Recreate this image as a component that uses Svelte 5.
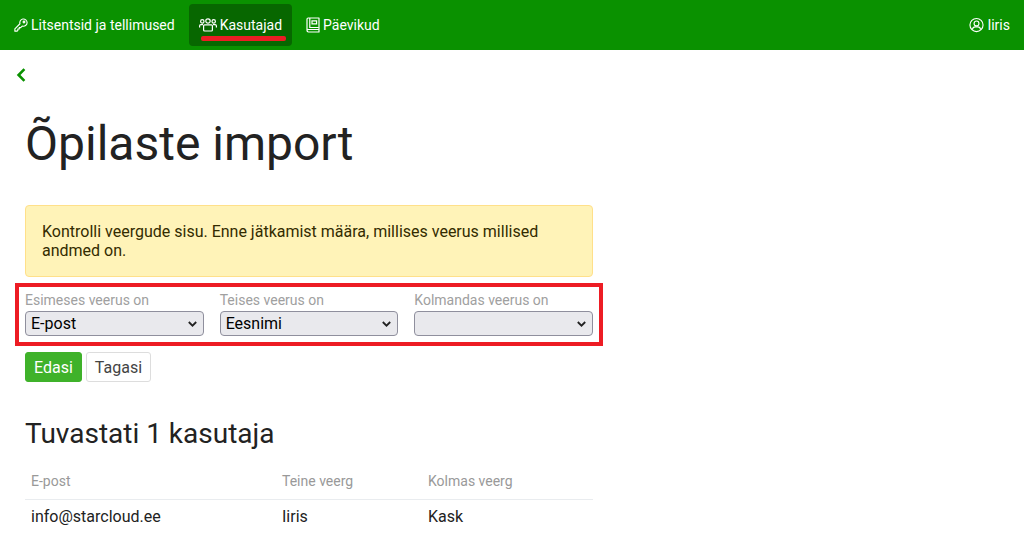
<script>
  const options = ['', 'E-post', 'Eesnimi', 'Perekonnanimi'];
  const columns = [
    { label: 'Esimeses veerus on', value: 'E-post' },
    { label: 'Teises veerus on', value: 'Eesnimi' },
    { label: 'Kolmandas veerus on', value: '' },
  ];
</script>

<nav class="topbar">
  <div class="nav-links">
    <a class="nav-link" href="#litsentsid">
      <svg viewBox="0 0 16 16" width="14" height="16" fill="none" stroke="currentColor" stroke-width="1.300">
        <path d="M15 5.200a4.200 4.200 0 0 1-5.600 4L7.600 11H6v1.600H4.400v1.600L3.600 15H1v-2.600l5.800-5.800A4.200 4.200 0 1 1 15 5.200z" stroke-linejoin="round" />
        <circle cx="11.400" cy="4.600" r="1" />
      </svg>
      Litsentsid ja tellimused
    </a>
    <a class="nav-link active" href="#kasutajad">
      <svg viewBox="0 0 18 14" width="18" height="14" fill="none" stroke="currentColor" stroke-width="1.2">
        <circle cx="9" cy="3" r="2.200" />
        <circle cx="3.300" cy="3.400" r="1.700" />
        <circle cx="14.700" cy="3.400" r="1.700" />
        <path d="M4.600 7.800c0-.6.500-1 1-1h6.800c.5 0 1 .4 1 1V12c0 .6-.5 1-1 1H5.600c-.5 0-1-.4-1-1z" stroke-linejoin="round" />
        <path d="M.6 9.600V8c0-.8.600-1.300 1.300-1.300h2.100M17.400 9.600V8c0-.8-.6-1.300-1.300-1.300H14" />
      </svg>
      Kasutajad
      <span class="mark-underline"></span>
    </a>
    <a class="nav-link" href="#paevikud">
      <svg viewBox="0 0 14 16" width="14" height="16" fill="none" stroke="currentColor" stroke-width="1.2">
        <path d="M1 13.200V2.200C1 1.500 1.500 1 2.200 1H13v11.500H2.500C1.600 12.500 1 12.900 1 13.600S1.600 15 2.500 15H13v-2.500" stroke-linejoin="round" />
        <path d="M3.800 1v9.500h9M6 3.800h4.600v3H6z" />
      </svg>
      Päevikud
    </a>
  </div>
  <a class="nav-link" href="#konto">
    <svg viewBox="0 0 16 16" width="15" height="16" fill="none" stroke="currentColor" stroke-width="1.2">
      <circle cx="8" cy="8" r="7" />
      <circle cx="8" cy="6.300" r="2.600" />
      <path d="M3.600 13c.4-2 1.800-3 3-3h2.800c1.200 0 2.600 1 3 3" />
    </svg>
    Iiris
  </a>
</nav>

<main class="page">
  <a class="back" href="#tagasi" aria-label="Tagasi">
    <svg viewBox="0 0 10 14" width="10" height="14" fill="none" stroke="currentColor" stroke-width="2.600">
      <path d="M8.400 1.200 2.600 7l5.800 5.800" />
    </svg>
  </a>

  <h1>Õpilaste import</h1>

  <div class="alert">Kontrolli veergude sisu. Enne jätkamist määra, millises veerus millised andmed on.</div>

  <div class="mapping">
    <div class="mapping-mark"></div>
    {#each columns as col (col.label)}
      <label class="field">
        <span class="field-label">{col.label}</span>
        <span class="select-wrap">
          <select value={col.value}>
            {#each options as opt}
              <option value={opt}>{opt}</option>
            {/each}
          </select>
          <svg class="select-chevron" viewBox="0 0 9 6" width="9" height="6" fill="none" stroke="currentColor" stroke-width="1.800">
            <path d="M.8 1 4.500 4.700 8.200 1" />
          </svg>
        </span>
      </label>
    {/each}
  </div>

  <div class="actions">
    <button class="btn primary">Edasi</button>
    <button class="btn">Tagasi</button>
  </div>

  <h2>Tuvastati 1 kasutaja</h2>

  <table>
    <thead>
      <tr>
        <th>E-post</th>
        <th>Teine veerg</th>
        <th>Kolmas veerg</th>
      </tr>
    </thead>
    <tbody>
      <tr>
        <td>info@starcloud.ee</td>
        <td>Iiris</td>
        <td>Kask</td>
      </tr>
    </tbody>
  </table>
</main>

<style>
  :global(body) {
    font-family: Roboto, "Liberation Sans", sans-serif;
    color: #222;
    background: #fff;
    overflow: hidden;
  }

  /* top bar */
  .topbar {
    display: flex;
    align-items: center;
    justify-content: space-between;
    height: 50px;
    background: #0a9100;
    padding: 0 4px;
    box-sizing: border-box;
  }
  .nav-links {
    display: flex;
    align-items: center;
    gap: 4px;
  }
  .nav-link {
    position: relative;
    display: flex;
    align-items: center;
    gap: 3px;
    height: 42px;
    padding: 0 10px;
    border-radius: 4px;
    color: #fff;
    font-size: 14px;
    text-decoration: none;
  }
  .nav-link.active {
    background: #076700;
  }
  .mark-underline {
    position: absolute;
    left: 12px;
    right: 6px;
    bottom: 5px;
    height: 5px;
    border-radius: 2px;
    background: #ed1c24;
  }

  /* page */
  .page {
    width: 568px;
    margin-left: 25px;
  }
  .back {
    display: block;
    width: 10px;
    height: 14px;
    margin: 18px 0 0 -9px;
    color: #0a9100;
  }
  .back svg {
    display: block;
  }
  h1 {
    margin: 33px 0 0;
    font-size: 48px;
    font-weight: 400;
    line-height: 58px;
  }
  .alert {
    margin-top: 32px;
    padding: 16px 16px 16px;
    background: #fff3b8;
    border: 1px solid #ffe08a;
    border-radius: 4px;
    font-size: 16px;
    line-height: 19px;
    color: #332b00;
  }

  /* column mapping */
  .mapping {
    position: relative;
    display: grid;
    grid-template-columns: repeat(3, 1fr);
    gap: 16px;
    margin-top: 14px;
    height: 45px;
  }
  .mapping-mark {
    position: absolute;
    inset: -8px -10px -10px -10px;
    border: 4px solid #ed1c24;
    pointer-events: none;
  }
  .field {
    display: flex;
    flex-direction: column;
    min-width: 0;
  }
  .field-label {
    font-size: 14px;
    line-height: 18px;
    color: #a0a0a0;
    margin-bottom: 2px;
  }
  .select-wrap {
    position: relative;
    display: block;
  }
  select {
    appearance: none;
    display: block;
    width: 100%;
    height: 25px;
    padding: 0 5px;
    font-family: inherit;
    font-size: 16px;
    color: #000;
    background: #e9e9ed;
    border: 1px solid #8f8f9d;
    border-radius: 4px;
  }
  .select-chevron {
    position: absolute;
    right: 7px;
    top: 10px;
    color: #222;
    pointer-events: none;
  }

  .actions {
    display: flex;
    gap: 4px;
    margin-top: 16px;
  }
  .btn {
    height: 30px;
    padding: 0 8px;
    font-family: inherit;
    font-size: 16px;
    color: #444;
    background: #fff;
    border: 1px solid #ddd;
    border-radius: 3px;
  }
  .btn.primary {
    color: #fff;
    background: #3fb22a;
    border-color: #3fb22a;
  }

  h2 {
    margin: 35px 0 0;
    font-size: 28px;
    font-weight: 400;
    line-height: 34px;
  }

  table {
    width: 100%;
    margin-top: 12px;
    border-collapse: collapse;
    table-layout: fixed;
  }
  th, td {
    padding: 0 5px;
    text-align: left;
  }
  th:nth-child(1), td:nth-child(1) { width: 241px; padding-left: 6px; }
  th:nth-child(2), td:nth-child(2) { width: 136px; }
  th {
    height: 36px;
    font-size: 14px;
    font-weight: 400;
    color: #999;
    border-bottom: 1px solid #e9ecef;
  }
  td {
    height: 32px;
    font-size: 16px;
  }
</style>
